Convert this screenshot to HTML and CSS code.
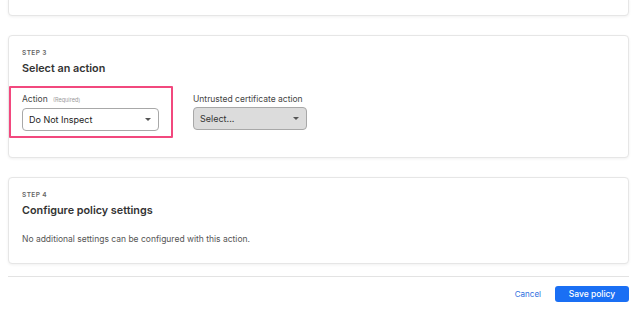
FILE: index.html
```html
<!DOCTYPE html>
<html lang="en">

<head>
  <meta charset="UTF-8">
  <meta name="viewport" content="width=device-width, initial-scale=1.0">
  <title>Policy</title>
  <link rel="stylesheet" href="styles.css">
</head>

<body>
  <div class="page">
    <div class="card card-prev"></div>

    <div class="card">
      <div class="step">Step 3</div>
      <h2 class="title">Select an action</h2>
      <div class="fields">
        <div class="field field-focus">
          <label class="label">Action <small>(Required)</small></label>
          <div class="select select-action">
            <span>Do Not Inspect</span>
            <span class="caret"></span>
          </div>
        </div>
        <div class="field">
          <label class="label">Untrusted certificate action</label>
          <div class="select select-disabled">
            <span>Select...</span>
            <span class="caret"></span>
          </div>
        </div>
      </div>
    </div>

    <div class="card card-settings">
      <div class="step">Step 4</div>
      <h2 class="title">Configure policy settings</h2>
      <p class="note">No additional settings can be configured with this action.</p>
    </div>

    <hr>

    <div class="footer">
      <button class="link">Cancel</button>
      <button class="primary">Save policy</button>
    </div>
  </div>
</body>

</html>
```

FILE: styles.css
```css
body {
  margin: 0;
  padding: 0;
  background: #fff;
  font-family: 'Inter', 'Noto Sans', sans-serif;
  color: #333;
}

.page {
  display: flex;
  flex-direction: column;
  gap: 19px;
  padding: 0 11px 0 8px;
}

.card {
  border: 1px solid #e6e6e6;
  border-radius: 4px;
  box-shadow: 0 1px 3px rgba(0, 0, 0, 0.06);
  padding: 13px 13px 19px;
  background: #fff;
}

.card-prev {
  height: 16px;
  margin-top: -2px;
  padding: 0;
  border-top-left-radius: 0;
  border-top-right-radius: 0;
}

.step {
  font-size: 6.5px;
  line-height: 9px;
  font-weight: 600;
  letter-spacing: 0.4px;
  text-transform: uppercase;
  color: #666;
}

.title {
  margin: 4px 0 0;
  font-size: 10.8px;
  line-height: 14px;
  font-weight: 600;
  color: #333;
}

.fields {
  display: flex;
  gap: 20px;
  margin-top: 10px;
}

.field {
  display: flex;
  flex-direction: column;
  gap: 2px;
}

.field-focus {
  margin-left: -13px;
  padding: 5px 12px 5px 11px;
  border: 2px solid #f2487e;
  border-radius: 1px;
}

.field:not(.field-focus) {
  padding-top: 7px;
}

.label {
  font-size: 8.5px;
  line-height: 12px;
  color: #444;
}

.label small {
  font-size: 5.5px;
  color: #999;
  margin-left: 3px;
}

.select {
  display: flex;
  align-items: center;
  justify-content: space-between;
  box-sizing: border-box;
  height: 23px;
  padding: 0 7px 0 6px;
  border: 1px solid #a8a8a8;
  border-radius: 4px;
  font-size: 9px;
  color: #222;
}

.select-action {
  width: 137px;
  background: #fff;
}

.select-disabled {
  width: 114px;
  background: #dcdcdc;
  color: #333;
}

.caret {
  width: 0;
  height: 0;
  border-left: 3px solid transparent;
  border-right: 3px solid transparent;
  border-top: 3.5px solid #555;
}

.card-settings {
  padding-bottom: 18px;
}

.note {
  margin: 15px 0 0;
  font-size: 8.5px;
  line-height: 12px;
  color: #555;
}

hr {
  border: none;
  border-bottom: 1px solid #e3e3e3;
  margin: -7px 0 0;
  padding: 0;
}

.footer {
  display: flex;
  justify-content: flex-end;
  align-items: center;
  gap: 14px;
  margin-top: -10px;
}

.footer button {
  font-family: inherit;
  font-size: 8.5px;
  cursor: pointer;
}

.link {
  border: none;
  background: none;
  color: #2f6fe0;
  padding: 0;
  font-size: 8px !important;
}

.primary {
  width: 74px;
  height: 16px;
  border: none;
  border-radius: 3px;
  background: #1a6ff4;
  color: #fff;
  font-weight: 500;
  padding: 0;
}
```
